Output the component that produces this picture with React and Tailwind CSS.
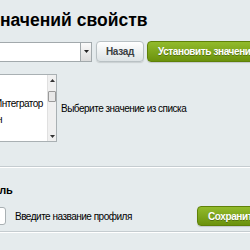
export default function App() {
  return (
    <div
      className="w-[250px] h-[250px] overflow-hidden bg-[#e5ebed] text-[#1f1f1f]"
      style={{ fontFamily: '"Liberation Sans", Arial, sans-serif' }}
    >
      <div className="pt-[9px] pl-[0px] h-[41px]">
        <div className="text-[17.5px] leading-[22px] font-bold text-black whitespace-nowrap">
          начений свойств
        </div>
      </div>

      <div className="flex items-center h-[21px] whitespace-nowrap">
        <div className="ml-[-60px] w-[152px] h-[20px] bg-white border border-[#a2a9ac] flex justify-end shrink-0">
          <div className="w-[11px] h-full border-l border-[#a2a9ac] bg-gradient-to-b from-[#fbfbfb] to-[#dcdcdc] flex items-center justify-center">
            <svg width="5" height="3" viewBox="0 0 5 3"><path d="M0 0h5L2.5 3z" fill="#222" /></svg>
          </div>
        </div>
        <div className="ml-[4px] w-[48px] h-[21px] shrink-0 rounded-[4px] border border-[#b9c1c4] bg-gradient-to-b from-[#ffffff] to-[#dde3e5] shadow-[0_1px_1px_rgba(0,0,0,0.12)] flex items-center justify-center text-[10px] tracking-[-0.3px] font-bold text-[#3a3f42]">
          Назад
        </div>
        <div className="ml-[3px] w-[130px] h-[21px] shrink-0 rounded-[4px] border border-[#5f8108] bg-gradient-to-b from-[#92bb2b] to-[#6b920c] shadow-[0_1px_1px_rgba(0,0,0,0.15)] flex items-center pl-[10px] text-[10px] tracking-[-0.4px] font-bold text-white [text-shadow:0_1px_0_rgba(0,0,0,0.3)]">
          Установить значение
        </div>
      </div>

      <div className="flex items-center mt-[12px]">
        <div className="ml-[-60px] w-[117px] h-[68px] shrink-0 bg-white border border-[#a9b0b3] flex">
          <div className="flex-1 flex flex-col justify-end pb-[13px] pl-[60px] text-[10px] tracking-[-0.5px] leading-[16px] text-black whitespace-nowrap">
            <div className="ml-[-6px]">Интегратор</div>
            <div className="ml-[-27px]">Админ</div>
          </div>
          <div className="w-[9px] h-full bg-[#f0f0f0] border-l border-[#e0e0e0] flex flex-col items-center">
            <div className="h-[10px] flex items-center">
              <svg width="5" height="3" viewBox="0 0 5 3"><path d="M0 3h5L2.5 0z" fill="#333" /></svg>
            </div>
            <div className="mt-[6px] w-[8px] h-[11px] bg-[#e8e8e8] border border-[#9a9a9a] rounded-[1px]" />
            <div className="flex-1" />
            <div className="h-[10px] flex items-center">
              <svg width="5" height="3" viewBox="0 0 5 3"><path d="M0 0h5L2.5 3z" fill="#333" /></svg>
            </div>
          </div>
        </div>
        <div className="ml-[4px] mt-[1px] text-[10px] tracking-[-0.5px] text-black whitespace-nowrap">
          Выберите значение из списка
        </div>
      </div>

      <div className="mt-[24px] h-[2px] border-t border-[#c5ccd0] border-b border-b-white" />

      <div className="mt-[15px] text-[11px] tracking-[-0.3px] leading-[14px] font-bold text-black ml-[-37px] whitespace-nowrap">
        Профиль
      </div>

      <div className="mt-[9px] flex items-center h-[20px] whitespace-nowrap">
        <div className="ml-[-60px] w-[66px] h-[18px] shrink-0 bg-white border border-[#a9b0b3] rounded-[3px]" />
        <div className="ml-[9px] text-[10px] tracking-[-0.5px] text-black">Введите название профиля</div>
        <div className="ml-auto mr-[-30px] w-[83px] h-[20px] shrink-0 rounded-[4px] border border-[#5f8108] bg-gradient-to-b from-[#92bb2b] to-[#6b920c] shadow-[0_1px_1px_rgba(0,0,0,0.15)] flex items-center pl-[10px] text-[10px] tracking-[-0.4px] font-bold text-white [text-shadow:0_1px_0_rgba(0,0,0,0.3)]">
          Сохранить
        </div>
      </div>

      <div className="mt-[5px] h-[2px] border-t border-[#c5ccd0] border-b border-b-white" />
    </div>
  );
}
